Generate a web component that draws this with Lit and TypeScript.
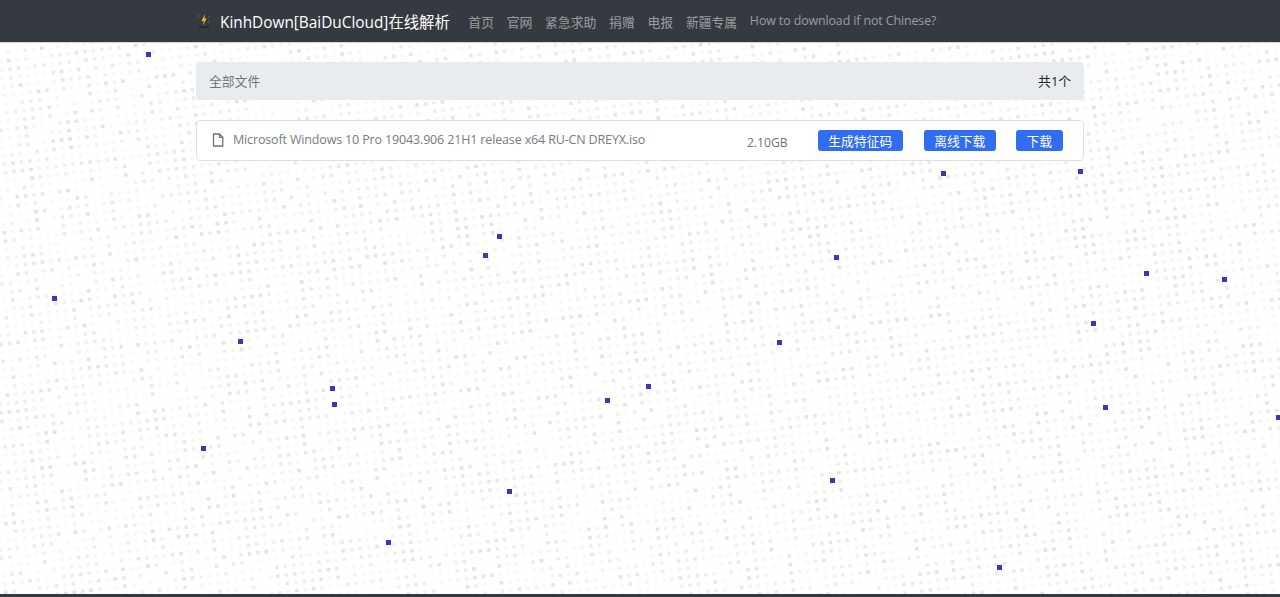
import { LitElement, html, css } from "lit";
import { customElement } from "lit/decorators.js";

const PURPLE: [number, number][] = [
  [148, 54], [943, 173], [1080, 171], [499, 236], [485, 255], [836, 257], [1146, 273], [1224, 279],
  [54, 298], [1093, 323], [240, 341], [779, 342], [332, 388], [648, 386], [607, 400], [334, 404],
  [1105, 407], [1278, 417], [203, 448], [832, 480], [509, 491], [388, 542], [999, 567],
];

const NAV = ["首页", "官网", "紧急求助", "捐赠", "电报", "新疆专属"];

@customElement("app-root")
export class AppRoot extends LitElement {
  static styles = css`
    :host {
      display: flex;
      flex-direction: column;
      position: relative;
      height: 100vh;
      overflow: hidden;
      background: #fff;
      font-family: "Open Sans", "Noto Sans CJK SC", sans-serif;
      font-size: 12.8px;
      color: #212529;
    }
    canvas {
      position: absolute;
      inset: 0;
    }
    .nav {
      position: relative;
      height: 43px;
      flex: none;
      box-sizing: border-box;
      background: #343a40;
      border-bottom: 1px solid #d4d5d6;
      padding-left: 196px;
      display: flex;
      align-items: center;
    }
    .logo {
      width: 16px;
      height: 16px;
      margin-right: 8px;
      display: block;
      margin-top: -2px;
    }
    .brand {
      color: #fff;
      font-size: 15.36px;
      margin-right: 18.5px;
      white-space: nowrap;
    }
    .links {
      display: flex;
      gap: 12.8px;
      color: rgba(255, 255, 255, 0.5);
      white-space: nowrap;
    }
    .en {
      font-size: 12.4px;
      letter-spacing: -0.1px;
    }
    .main {
      position: relative;
      flex: 1;
      width: 888px;
      margin-left: 196px;
      padding-top: 19px;
      display: flex;
      flex-direction: column;
      gap: 20px;
    }
    .head {
      height: 38px;
      box-sizing: border-box;
      background: #e9ecef;
      border-radius: 4px;
      padding: 0 13px 2px;
      display: flex;
      align-items: center;
      justify-content: space-between;
      color: #6c757d;
    }
    .count {
      color: #212529;
    }
    .row {
      height: 41px;
      box-sizing: border-box;
      background: #fff;
      border: 1px solid #dfdfdf;
      border-radius: 4px;
      display: flex;
      align-items: center;
      padding: 0 20.5px 0 15px;
    }
    .file {
      width: 12px;
      height: 14px;
      margin-right: 9px;
      flex: none;
      margin-top: -2px;
    }
    .name {
      flex: 1;
      color: #737c84;
      font-size: 12.5px;
      letter-spacing: -0.15px;
      white-space: nowrap;
      margin-top: -3px;
    }
    .size {
      color: #6c757d;
      font-size: 12.2px;
      margin-right: 30px;
      margin-top: 3px;
    }
    .btn {
      height: 21px;
      box-sizing: border-box;
      padding: 0 10.5px 1px;
      background: #316cf4;
      color: #fff;
      border-radius: 3px;
      display: flex;
      align-items: center;
    }
    .b1 {
      margin-right: 21px;
    }
    .b2 {
      margin-right: 20px;
    }
    .foot {
      position: relative;
      flex: none;
      height: 3px;
      background: #343a40;
    }
    .p {
      position: absolute;
      width: 4.6px;
      height: 4.6px;
      background: #4a2fbd;
    }
  `;

  firstUpdated() {
    const c = this.renderRoot.querySelector("canvas") as HTMLCanvasElement;
    c.width = 1280;
    c.height = 597;
    const g = c.getContext("2d")!;
    let s = 12345;
    const rnd = () => {
      s = (s * 1664525 + 1013904223) >>> 0;
      return s / 4294967296;
    };
    const ang = (-7 * Math.PI) / 180;
    const step = 8.5;
    const co = Math.cos(ang);
    const si = Math.sin(ang);
    for (let i = -20; i < 170; i++) {
      for (let j = -20; j < 100; j++) {
        const x = i * step * co - j * step * si;
        const y = i * step * si + j * step * co;
        if (x < -4 || y < -4 || x > 1284 || y > 600) continue;
        const r = rnd();
        const v = rnd();
        const a = r < 0.2 ? 0.015 : 0.035 + v * v * 0.14;
        g.fillStyle = `rgba(90,90,90,${a})`;
        g.fillRect(x, y, 3.6, 3.6);
      }
    }
  }

  render() {
    return html`
      <canvas></canvas>
      ${PURPLE.map(
        ([x, y]) => html`<div class="p" style="left:${x - 2}px;top:${y - 2}px"></div>`
      )}
      <div class="nav">
        <svg class="logo" viewBox="0 0 16 16">
          <ellipse cx="8" cy="15" rx="6" ry="0.6" fill="#1a1a1a" />
          <path d="M9 2 L5.5 9 H7.6 L6.8 13.5 L10.5 6.5 H8.5 Z" fill="#e8c020" />
          <circle cx="3" cy="4" r="0.8" fill="#6b6a4a" />
          <circle cx="13" cy="5" r="0.8" fill="#55606a" />
          <circle cx="12.5" cy="10" r="0.8" fill="#55606a" />
        </svg>
        <span class="brand">KinhDown[BaiDuCloud]在线解析</span>
        <div class="links">
          ${NAV.map((n) => html`<span>${n}</span>`)}
          <span class="en">How to download if not Chinese?</span>
        </div>
      </div>
      <div class="main">
        <div class="head"><span>全部文件</span><span class="count">共1个</span></div>
        <div class="row">
          <svg class="file" viewBox="0 0 12 14" fill="none" stroke="#6c757d" stroke-width="1.3">
            <path d="M1.5 1 H7.5 L10.8 4.3 V13 H1.5 Z" />
            <path d="M7.5 1 V4.3 H10.8" />
          </svg>
          <span class="name">Microsoft Windows 10 Pro 19043.906 21H1 release x64 RU-CN DREYX.iso</span>
          <span class="size">2.10GB</span>
          <span class="btn b1">生成特征码</span>
          <span class="btn b2">离线下载</span>
          <span class="btn">下载</span>
        </div>
      </div>
      <div class="foot"></div>
    `;
  }
}
